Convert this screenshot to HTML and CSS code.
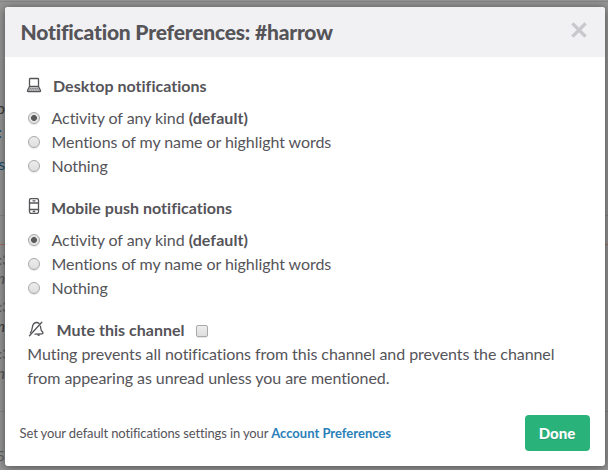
FILE: index.html
```html
<!DOCTYPE html>
<html lang="en">
<head>
<meta charset="utf-8">
<title>Notification Preferences</title>
<link rel="stylesheet" href="styles.css">
</head>
<body>
<div class="backdrop" aria-hidden="true">
  <i class="rule r1"></i><i class="rule r2"></i><i class="rule r3 unread"></i><i class="rule r4"></i>
  <span class="frag f1">p</span>
  <span class="frag f2 link">:</span>
  <span class="frag f3 link">s</span>
  <span class="frag f4 time">:3</span>
  <span class="frag f5">m</span>
  <span class="frag f6 time">:3</span>
  <span class="frag f7">m</span>
  <span class="frag f8 time">:3</span>
  <span class="frag f9">n</span>
  <span class="frag f10 time">5:</span>
  <span class="frag f11">Invitation to this channel <b class="link">by another friend</b></span>
</div>
<main class="modal">
  <header class="head">
    <h1>Notification Preferences: #harrow</h1>
    <svg class="close" width="16" height="16" viewBox="0 0 16 16"><path d="M1.4 1.4 14.6 14.6M14.6 1.4 1.4 14.6"/></svg>
  </header>
  <div class="body">
    <section class="group">
      <h2><svg class="icon" width="16" height="16" viewBox="0 0 16 16"><path d="M3.5 9.5V2.2q0-.7.7-.7h7.6q.7 0 .7.7v7.3zM3.5 9.5 1.5 13.6q-.2.9.7.9h11.6q.9 0 .7-.9L12.5 9.5"/><path class="keys" d="M4 11.3h8M3.3 12.9h9.4"/></svg><span class="desk">Desktop notifications</span></h2>
      <label><input type="radio" name="desktop" checked><span>Activity of any kind <b>(default)</b></span></label>
      <label><input type="radio" name="desktop"><span>Mentions of my name or highlight words</span></label>
      <label><input type="radio" name="desktop"><span>Nothing</span></label>
    </section>
    <section class="group">
      <h2><svg class="icon phone" width="16" height="16" viewBox="0 0 16 16"><rect x="3.5" y=".6" width="9" height="14.8" rx="1.6"/><path d="M3.5 5h9M3.5 11.5h9M7 2.8h2M7.3 13.5h1.4"/></svg><span>Mobile push notifications</span></h2>
      <label><input type="radio" name="mobile" checked><span>Activity of any kind <b>(default)</b></span></label>
      <label><input type="radio" name="mobile"><span>Mentions of my name or highlight words</span></label>
      <label><input type="radio" name="mobile"><span>Nothing</span></label>
    </section>
    <section class="group">
      <h2><svg class="icon bell" width="16" height="16" viewBox="0 0 16 16"><path d="M2.3 11.7C5 9.5 3.5 5.4 5.5 3 7 1.2 9.5 1 11 2.4M12.4 5.2c.7 2.4-.2 4 2.4 6.1q.5 1.4-.9 1.5L7 13.2M9.5 13.5q1.1 1.8 2.5-.3M1.5 14.8 13.8 1.2"/></svg><span class="mute">Mute this channel</span><input type="checkbox" aria-label="Mute this channel"></h2>
      <p>Muting prevents all notifications from this channel and prevents the channel from appearing as unread unless you are mentioned.</p>
    </section>
  </div>
  <footer class="foot">
    <div class="hint">Set your default notifications settings in your <a>Account Preferences</a></div>
    <button>Done</button>
  </footer>
</main>
</body>
</html>
```
FILE: styles.css
```css
* { box-sizing: border-box; }
body {
  margin: 0;
  width: 608px;
  height: 470px;
  padding: 7px 3px 4px 5px;
  overflow: hidden;
  background: #969696;
  font: 16px/24px Lato, "Liberation Sans", sans-serif;
  letter-spacing: -.065px;
  color: #555459;
}
.backdrop { position: absolute; inset: 0; overflow: hidden; }
.rule { position: absolute; left: 0; width: 100%; height: 1px; background: #868686; }
.r1 { top: 1px; }
.r2 { top: 215px; }
.r3 { top: 244px; }
.r4 { top: 411px; }
.unread { background: #a57060; }
.frag { position: absolute; right: 603px; line-height: 20px; white-space: nowrap; color: #3c3c3c; }
.frag.link, .frag .link { color: #1a4f70; }
.frag.time { left: -1px; right: auto; font-size: 13px; color: #606060; }
.f1 { top: 98px; }
.f2 { top: 122px; right: 606px; }
.f3 { top: 154px; }
.f4 { top: 250px; }
.f5 { top: 268px; font-style: italic; color: #555; }
.f6 { top: 297px; }
.f7 { top: 316px; font-style: italic; }
.f8 { top: 344px; }
.f9 { top: 363px; font-style: italic; color: #555; }
.frag.f10 { top: 446px; left: -3px; }
.f11 { top: 467px; left: 32px; right: auto; }
.modal {
  position: relative;
  width: 600px;
  height: 459px;
  display: flex;
  flex-direction: column;
  border-radius: 3px;
  background: #fff;
  box-shadow: 0 1px 10px rgba(0, 0, 0, .5);
}
.head {
  height: 50px;
  display: flex;
  align-items: center;
  justify-content: space-between;
  padding: 0 18px 0 15.5px;
  border-radius: 3px 3px 0 0;
  background: #f1f1f3;
}
h1 { margin: 0; font-size: 21px; font-weight: 900; line-height: 50px; letter-spacing: -.2px; }
.close { margin-bottom: 5px; fill: none; stroke: #c9c9cd; stroke-width: 3.4; }
.body { flex: 1; padding: 17px 22px 0; }
.group { margin-bottom: 18px; }
h2 {
  display: flex;
  align-items: center;
  margin: 0 0 8px;
  height: 24px;
  font-size: 16px;
  font-weight: 700;
  letter-spacing: .025px;
}
.icon {
  margin: 0 9px 2px -1px;
  fill: none;
  stroke: #555459;
  stroke-width: 1.3;
  stroke-linecap: round;
  stroke-linejoin: round;
}
.icon.phone { margin-bottom: 5px; }
.icon.bell { margin-left: 1px; margin-bottom: 2px; }
.keys { stroke-width: .9; stroke-dasharray: .8 1; }
.desk { margin-left: 2px; }
.mute { margin-left: 3.5px; }
label { display: flex; align-items: center; height: 24px; }
label b { letter-spacing: .08px; }
input {
  appearance: none;
  flex: none;
  width: 12px;
  height: 12px;
  margin: 0 12px 0 1px;
  border: 1px solid #a9a9a9;
  border-radius: 50%;
  background: linear-gradient(#ededed, #dedede);
  box-shadow: 0 1px 1px rgba(0, 0, 0, .1);
}
input:checked { background: radial-gradient(circle, #5b5b5b 2.6px, #e5e5e5 3.3px); }
label span { margin-left: -.5px; }
input[type="checkbox"] { margin: 1px 0 0 11px; border-radius: 2px; }
.group:last-child h2 { margin: 0; }
p { margin: 0; width: 540px; padding-left: .3px; }
.foot {
  display: flex;
  align-items: center;
  justify-content: space-between;
  padding: 0 15px 15px 14.6px;
}
.hint { font-size: 13px; line-height: 20px; letter-spacing: -.13px; }
a { color: #2a80b9; font-weight: 700; letter-spacing: 0; }
button {
  width: 65px;
  height: 36px;
  padding: 0 1px 1px 0;
  border: 0;
  border-radius: 4px;
  background: #2ab27b;
  color: #fff;
  font: 900 15px/20px Lato, sans-serif;
  text-shadow: 0 1px 1px rgba(0, 0, 0, .12);
}
```
